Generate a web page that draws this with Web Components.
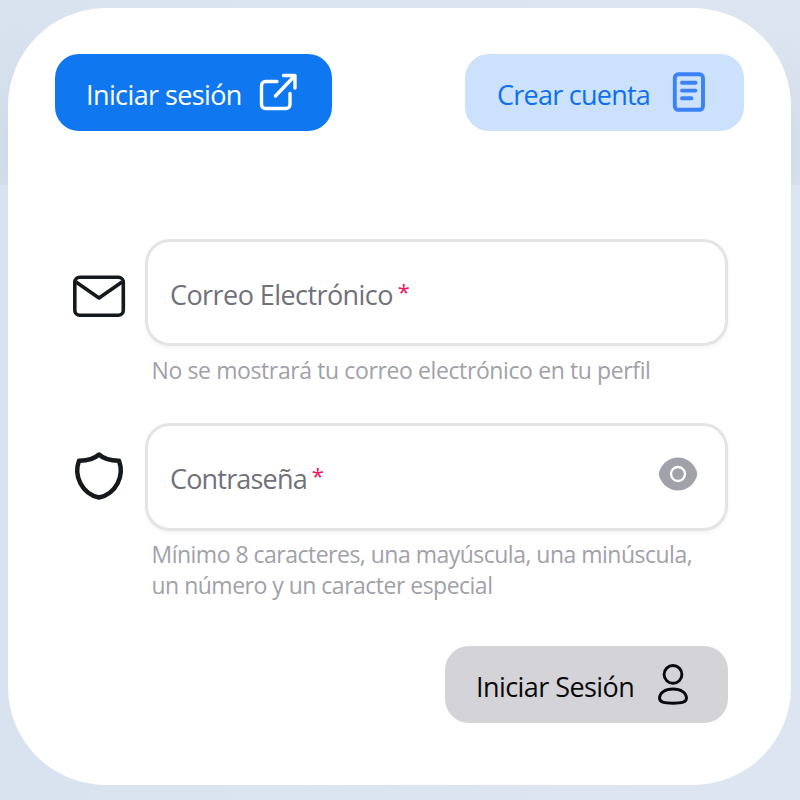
<!DOCTYPE html>
<html lang="es">
<head>
<meta charset="utf-8">
<title>Iniciar sesión</title>
<style>
html, body { margin: 0; height: 100%; overflow: hidden; }
body {
  box-sizing: border-box; width: 800px; height: 800px; padding: 8px 9px 15px 8px;
  background: radial-gradient(ellipse 55px 130px at 18px 150px, rgba(90,110,140,.085), transparent) no-repeat 0 0 / 100% 185px,
    radial-gradient(ellipse 55px 130px at 782px 150px, rgba(90,110,140,.085), transparent) no-repeat 0 0 / 100% 185px,
    linear-gradient(90deg, #d9e3f0, #dee5f2);
  font-family: "Open Sans", "Noto Sans", sans-serif;
}
</style>
</head>
<body>
<login-card>
  <tab-button slot="tabs" tone="primary" style="--w:277px;--ls:-.6px">Iniciar sesión
    <svg slot="icon" width="40" height="42" viewBox="0 0 40 42" fill="none" stroke="#fff" stroke-width="3.4" stroke-linecap="round" stroke-linejoin="round"><path d="M18 10.5H6.500a4 4 0 0 0-4 4V33.500a4 4 0 0 0 4 4H27a4 4 0 0 0 4-4V22.500M16.500 25 36 4.500M24.500 4.500H36V17"/></svg>
  </tab-button>
  <tab-button slot="tabs" tone="soft" style="--w:279px;--ls:-.75px;--gap:22px;--start:32px">Crear cuenta
    <svg slot="icon" width="34" height="42" viewBox="0 0 34 42" fill="none" stroke="#3b82f6" stroke-width="3.900" stroke-linecap="round"><rect x="2.800" y="3.300" width="28.200" height="35.500" rx="3.500"/><path d="M10 11.800H23.500M10 19.600H23.500M10 27.300H19.500"/></svg>
  </tab-button>
  <field-row>
    <svg slot="icon" width="54" height="44" viewBox="0 0 54 44" fill="none" stroke="#14191e" stroke-width="3.600" stroke-linejoin="round"><rect x="2.800" y="3.300" width="48.500" height="38" rx="5"/><path d="M4 8 27 24 50 8"/></svg>
    <span slot="label" style="letter-spacing:-.57px">Correo Electrónico</span>
    <span slot="hint" style="letter-spacing:-.39px">No se mostrará tu correo electrónico en tu perfil</span>
  </field-row>
  <field-row style="--lift:-9px;--hint-top:8px">
    <svg slot="icon" width="54" height="50" viewBox="0 0 54 50" fill="none" stroke="#14191e" stroke-width="4.500" stroke-linejoin="round"><path d="M27 3.500C22 8 14.500 9.800 7 9.700 1.500 24.500 9.500 42.500 27 46.500 44.500 42.500 52.500 24.500 47 9.700 39.500 9.800 32 8 27 3.500Z"/></svg>
    <span slot="label" style="letter-spacing:-.82px">Contraseña</span>
    <svg slot="action" width="40" height="34" viewBox="0 0 40 34"><path d="M20 .500C29 .500 35 6 38.500 13.500Q40 17 38.500 20.500C35 28 29 33.500 20 33.500S5 28 1.500 20.500Q0 17 1.500 13.500C5 6 11 .500 20 .500Z" fill="#a1a1aa"/><circle cx="20" cy="17" r="7" fill="none" stroke="#fff" stroke-width="2.300"/></svg>
    <span slot="hint" style="letter-spacing:-.51px">Mínimo 8 caracteres, una mayúscula, una minúscula,<br>un número y un caracter especial</span>
  </field-row>
  <tab-button slot="submit" tone="neutral" style="--w:283px;--ls:-.57px;--gap:22px">Iniciar Sesión
    <svg slot="icon" width="34" height="44" viewBox="0 0 34 44" fill="none" stroke="#09090b" stroke-width="2.900"><circle cx="17" cy="12.400" r="8.900"/><path d="M17 27C25 27 30.500 31 30.500 36 30.500 40.200 26 41.300 17 41.300S3.500 40.200 3.500 36C3.500 31 9 27 17 27Z"/></svg>
  </tab-button>
</login-card>
<script>
class LoginCard extends HTMLElement {
  constructor() {
    super();
    this.attachShadow({ mode: 'open' }).innerHTML = `
      <style>
        :host { display: flex; flex-direction: column; box-sizing: border-box; height: 777px;
          padding: 46px 63px 0 47px; border-radius: 98px; background: #fff; }
        header { display: flex; justify-content: space-between; height: 77px; margin-right: -16px; }
        main { display: flex; flex-direction: column; padding: 107.500px 0 0 17px; }
        footer { display: flex; justify-content: flex-end; }
      </style>
      <header><slot name="tabs"></slot></header>
      <main><slot></slot></main>
      <footer><slot name="submit"></slot></footer>`;
  }
}
class TabButton extends HTMLElement {
  constructor() {
    super();
    this.attachShadow({ mode: 'open' }).innerHTML = `
      <style>
        :host { display: block; width: var(--w); height: 77px; color: #0c70f0; }
        button { all: unset; box-sizing: border-box; display: flex; align-items: center; width: 100%; height: 100%;
          padding: 0 0 1px var(--start, 31px); border-radius: 24px; background: #cce1fc; font-size: 27px; white-space: nowrap; }
        .text { letter-spacing: var(--ls); padding-top: 5px; margin-right: var(--gap, 17px); }
        :host([tone=primary]) { color: #fff; }
        :host([tone=primary]) button { background: #0f77f0; }
        :host([tone=neutral]) { color: #09090b; }
        :host([tone=neutral]) button { background: #d4d4d8; }
        .icon { display: flex; }
      </style>
      <button type="button"><span class="text"><slot></slot></span><span class="icon"><slot name="icon"></slot></span></button>`;
  }
}
class FieldRow extends HTMLElement {
  constructor() {
    super();
    this.attachShadow({ mode: 'open' }).innerHTML = `
      <style>
        :host { display: grid; grid-template-columns: 54px 583.500px; column-gap: 18.500px; height: 184.500px; }
        :host(:last-of-type) { height: 222.500px; }
        .icon { display: flex; align-items: center; height: calc(115px + var(--lift, 0px)); }
        .box { box-sizing: border-box; display: flex; align-items: center; height: 107.500px; padding: 0 27px 0 22.500px;
          border: 3px solid #e4e4e7; border-radius: 25px; box-shadow: 0 2px 4px rgba(0,0,0,.05); color: #71717a; font-size: 27px; }
        .label { display: flex; align-items: flex-start; padding-top: 4px; }
        .star { color: #f31260; margin-left: 5px; font-size: 22px; line-height: 31px; }
        .action { display: flex; margin: 0 0 6px auto; }
        .hint { margin: var(--hint-top, 9px) 0 0 7px; color: #a1a1aa; font-size: 23px; line-height: 31px; white-space: nowrap; }
      </style>
      <div class="icon"><slot name="icon"></slot></div>
      <div>
        <div class="box"><span class="label"><slot name="label"></slot><span class="star">*</span></span><span class="action"><slot name="action"></slot></span></div>
        <div class="hint"><slot name="hint"></slot></div>
      </div>`;
  }
}
customElements.define('login-card', LoginCard);
customElements.define('tab-button', TabButton);
customElements.define('field-row', FieldRow);
</script>
</body>
</html>
